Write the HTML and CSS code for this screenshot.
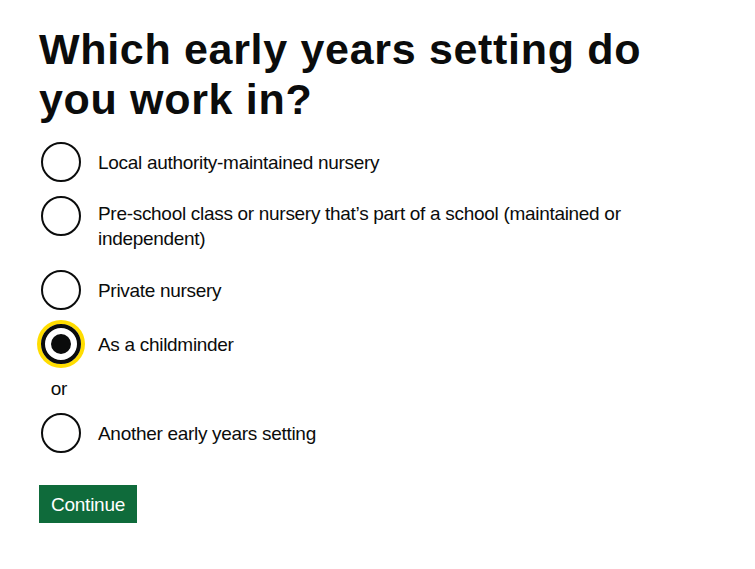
FILE: index.html
```html
<!DOCTYPE html>
<html lang="en">
<head>
<meta charset="utf-8">
<title>Which early years setting do you work in?</title>
<link rel="stylesheet" href="styles.css">
</head>
<body>
<main class="page">
  <form class="form">
    <div class="form-group">
      <fieldset class="fieldset">
        <legend class="legend">
          <h1 class="heading">Which early years setting do you work in?</h1>
        </legend>
        <div class="radios">
          <div class="radio-item">
            <input class="radio-input" id="s1" name="setting" type="radio" value="la">
            <label class="radio-label" for="s1">Local authority-maintained nursery</label>
          </div>
          <div class="radio-item">
            <input class="radio-input" id="s2" name="setting" type="radio" value="school">
            <label class="radio-label" for="s2">Pre-school class or nursery that’s part of a school (maintained or independent)</label>
          </div>
          <div class="radio-item">
            <input class="radio-input" id="s3" name="setting" type="radio" value="private">
            <label class="radio-label" for="s3">Private nursery</label>
          </div>
          <div class="radio-item is-focused">
            <input class="radio-input" id="s4" name="setting" type="radio" value="childminder" checked>
            <label class="radio-label" for="s4">As a childminder</label>
          </div>
          <div class="radio-divider">or</div>
          <div class="radio-item">
            <input class="radio-input" id="s5" name="setting" type="radio" value="other">
            <label class="radio-label" for="s5">Another early years setting</label>
          </div>
        </div>
      </fieldset>
    </div>
    <button class="button" type="submit">Continue</button>
  </form>
</main>
</body>
</html>
```

FILE: styles.css
```css
html, body {
  margin: 0;
  padding: 0;
  background: #ffffff;
}

body {
  font-family: "Liberation Sans", Arial, sans-serif;
  color: #0b0c0c;
}

.page {
  padding: 24px 0 0 39px;
  width: 660px;
}

.form-group {
  margin-bottom: 30px;
}

.fieldset {
  margin: 0;
  padding: 0;
  border: 0;
  min-width: 0;
}

.legend {
  padding: 0;
  margin: 0 0 16px;
  display: table;
  max-width: 100%;
}

.heading {
  margin: 0;
  font-size: 43px;
  line-height: 50px;
  font-weight: 700;
  letter-spacing: 0.68px;
  color: #0b0c0c;
}

.radios {
  font-size: 19px;
  line-height: 25px;
}

.radio-item {
  display: flex;
  flex-wrap: wrap;
  position: relative;
  margin-bottom: 10px;
}

.radio-item:last-child {
  margin-bottom: 0;
}

.radio-input {
  position: relative;
  z-index: 1;
  width: 44px;
  height: 44px;
  margin: 0;
  opacity: 0;
  cursor: pointer;
}

.radio-label {
  align-self: center;
  max-width: calc(100% - 74px);
  padding: 7px 15px;
  letter-spacing: -0.3px;
  cursor: pointer;
}

.radio-label::before {
  content: "";
  box-sizing: border-box;
  position: absolute;
  top: 2px;
  left: 2px;
  width: 40px;
  height: 40px;
  border: 2px solid #0b0c0c;
  border-radius: 50%;
  background: transparent;
}

.radio-label::after {
  content: "";
  position: absolute;
  top: 12px;
  left: 12px;
  width: 0;
  height: 0;
  border: 10px solid #0b0c0c;
  border-radius: 50%;
  opacity: 0;
}

.radio-input:checked + .radio-label::after {
  opacity: 1;
}

.is-focused .radio-label::before,
.radio-input:focus + .radio-label::before {
  border-width: 4px;
  box-shadow: 0 0 0 4px #ffdd00;
}

.radio-divider {
  width: 40px;
  margin-bottom: 10px;
  text-align: center;
  letter-spacing: -0.25px;
}

.button {
  display: inline-block;
  margin: 0;
  padding: 8px 10px 7px;
  border: 2px solid transparent;
  border-radius: 0;
  background: #0f6b3b;
  box-shadow: 0 2px 0 #002d18;
  color: #ffffff;
  font-family: "Liberation Sans", Arial, sans-serif;
  font-size: 19px;
  line-height: 1;
  font-weight: 400;
  letter-spacing: -0.25px;
  cursor: pointer;
}
```
